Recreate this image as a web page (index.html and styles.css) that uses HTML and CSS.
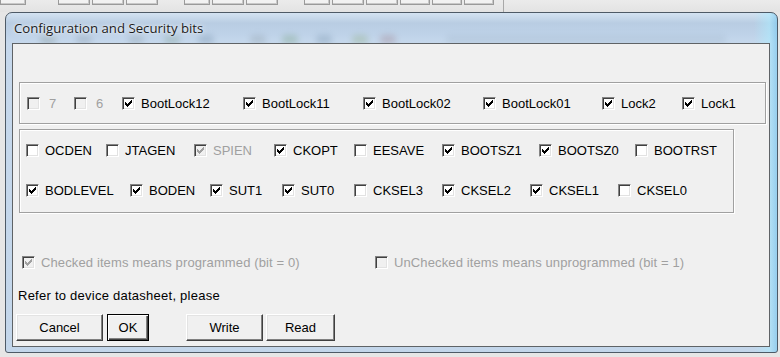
FILE: index.html
```html
<!DOCTYPE html>
<html>
<head>
<meta charset="utf-8">
<title>Configuration and Security bits</title>
<link rel="stylesheet" href="styles.css">
</head>
<body>
<div class="toolbar">
  <span class="tb tb-a"></span>
  <span class="tb tb-b"></span>
  <span class="tb tb-b"></span>
  <span class="tb tb-b"></span>
  <span class="tb tb-c"></span>
  <span class="tb tb-b"></span>
  <span class="tb tb-b"></span>
  <span class="tb tb-c"></span>
  <span class="tb tb-b"></span>
  <span class="tb tb-b"></span>
  <span class="tb tb-d"></span>
  <span class="tb tb-d"></span>
  <span class="tb tb-d"></span>
  <span class="tb-sep"></span>
</div>
<div class="window">
  <div class="titlebar">
    <span class="title">Configuration and Security bits</span>
    <div class="ghosts">
      <span class="ghost g1"></span><span class="ghost g2"></span><span class="ghost g3"></span>
      <span class="ghost g4"></span><span class="ghost g5"></span><span class="ghost g6"></span>
      <span class="ghost g7"></span><span class="ghost g8"></span><span class="ghost g9"></span>
      <span class="ghost g10"></span><span class="ghost g11"></span>
    </div>
  </div>
  <div class="client">
    <div class="group lock">
      <label class="item w47 dis gap9"><span class="cb"></span>7</label>
      <label class="item w48 dis gap9"><span class="cb"></span>6</label>
      <label class="item w121"><span class="cb on"><svg viewBox="0 0 7 7" width="7" height="7"><path d="M0 2H1V3H2V4H3V3H4V2H5V1H6V0H7V3H6V4H5V5H4V6H3V7H2V6H1V5H0Z"/></svg></span>BootLock12</label>
      <label class="item w120"><span class="cb on"><svg viewBox="0 0 7 7" width="7" height="7"><path d="M0 2H1V3H2V4H3V3H4V2H5V1H6V0H7V3H6V4H5V5H4V6H3V7H2V6H1V5H0Z"/></svg></span>BootLock11</label>
      <label class="item w120"><span class="cb on"><svg viewBox="0 0 7 7" width="7" height="7"><path d="M0 2H1V3H2V4H3V3H4V2H5V1H6V0H7V3H6V4H5V5H4V6H3V7H2V6H1V5H0Z"/></svg></span>BootLock02</label>
      <label class="item w119"><span class="cb on"><svg viewBox="0 0 7 7" width="7" height="7"><path d="M0 2H1V3H2V4H3V3H4V2H5V1H6V0H7V3H6V4H5V5H4V6H3V7H2V6H1V5H0Z"/></svg></span>BootLock01</label>
      <label class="item w80"><span class="cb on"><svg viewBox="0 0 7 7" width="7" height="7"><path d="M0 2H1V3H2V4H3V3H4V2H5V1H6V0H7V3H6V4H5V5H4V6H3V7H2V6H1V5H0Z"/></svg></span>Lock2</label>
      <label class="item"><span class="cb on"><svg viewBox="0 0 7 7" width="7" height="7"><path d="M0 2H1V3H2V4H3V3H4V2H5V1H6V0H7V3H6V4H5V5H4V6H3V7H2V6H1V5H0Z"/></svg></span>Lock1</label>
    </div>

    <div class="group fuse">
      <div class="row">
        <label class="item w80"><span class="cb"></span>OCDEN</label>
        <label class="item w88"><span class="cb"></span>JTAGEN</label>
        <label class="item w80 dis"><span class="cb on"><svg viewBox="0 0 7 7" width="7" height="7"><path d="M0 2H1V3H2V4H3V3H4V2H5V1H6V0H7V3H6V4H5V5H4V6H3V7H2V6H1V5H0Z"/></svg></span>SPIEN</label>
        <label class="item w80"><span class="cb on"><svg viewBox="0 0 7 7" width="7" height="7"><path d="M0 2H1V3H2V4H3V3H4V2H5V1H6V0H7V3H6V4H5V5H4V6H3V7H2V6H1V5H0Z"/></svg></span>CKOPT</label>
        <label class="item w88"><span class="cb"></span>EESAVE</label>
        <label class="item w97"><span class="cb on"><svg viewBox="0 0 7 7" width="7" height="7"><path d="M0 2H1V3H2V4H3V3H4V2H5V1H6V0H7V3H6V4H5V5H4V6H3V7H2V6H1V5H0Z"/></svg></span>BOOTSZ1</label>
        <label class="item w96"><span class="cb on"><svg viewBox="0 0 7 7" width="7" height="7"><path d="M0 2H1V3H2V4H3V3H4V2H5V1H6V0H7V3H6V4H5V5H4V6H3V7H2V6H1V5H0Z"/></svg></span>BOOTSZ0</label>
        <label class="item"><span class="cb"></span>BOOTRST</label>
      </div>
      <div class="row">
        <label class="item w104"><span class="cb on"><svg viewBox="0 0 7 7" width="7" height="7"><path d="M0 2H1V3H2V4H3V3H4V2H5V1H6V0H7V3H6V4H5V5H4V6H3V7H2V6H1V5H0Z"/></svg></span>BODLEVEL</label>
        <label class="item w80"><span class="cb on"><svg viewBox="0 0 7 7" width="7" height="7"><path d="M0 2H1V3H2V4H3V3H4V2H5V1H6V0H7V3H6V4H5V5H4V6H3V7H2V6H1V5H0Z"/></svg></span>BODEN</label>
        <label class="item w72"><span class="cb on"><svg viewBox="0 0 7 7" width="7" height="7"><path d="M0 2H1V3H2V4H3V3H4V2H5V1H6V0H7V3H6V4H5V5H4V6H3V7H2V6H1V5H0Z"/></svg></span>SUT1</label>
        <label class="item w72"><span class="cb on"><svg viewBox="0 0 7 7" width="7" height="7"><path d="M0 2H1V3H2V4H3V3H4V2H5V1H6V0H7V3H6V4H5V5H4V6H3V7H2V6H1V5H0Z"/></svg></span>SUT0</label>
        <label class="item w88"><span class="cb"></span>CKSEL3</label>
        <label class="item w88"><span class="cb on"><svg viewBox="0 0 7 7" width="7" height="7"><path d="M0 2H1V3H2V4H3V3H4V2H5V1H6V0H7V3H6V4H5V5H4V6H3V7H2V6H1V5H0Z"/></svg></span>CKSEL2</label>
        <label class="item w88"><span class="cb on"><svg viewBox="0 0 7 7" width="7" height="7"><path d="M0 2H1V3H2V4H3V3H4V2H5V1H6V0H7V3H6V4H5V5H4V6H3V7H2V6H1V5H0Z"/></svg></span>CKSEL1</label>
        <label class="item"><span class="cb"></span>CKSEL0</label>
      </div>
    </div>

    <div class="legend">
      <label class="item w353 dis"><span class="cb on"><svg viewBox="0 0 7 7" width="7" height="7"><path d="M0 2H1V3H2V4H3V3H4V2H5V1H6V0H7V3H6V4H5V5H4V6H3V7H2V6H1V5H0Z"/></svg></span>Checked items means programmed (bit = 0)</label>
      <label class="item dis"><span class="cb"></span>UnChecked items means unprogrammed (bit = 1)</label>
    </div>

    <div class="note">Refer to device datasheet, please</div>

    <div class="buttons">
      <button class="btn b-cancel">Cancel</button>
      <button class="btn b-ok default">OK</button>
      <button class="btn b-write">Write</button>
      <button class="btn b-read">Read</button>
    </div>
  </div>
</div>
</body>
</html>
```
FILE: styles.css
```css
* { box-sizing: border-box; }

html, body {
  margin: 0;
  padding: 0;
}

body {
  width: 780px;
  height: 357px;
  overflow: hidden;
  background: #e6e6e6;
  font-family: "Liberation Sans", Arial, sans-serif;
  font-size: 13px;
  color: #000;
}

/* strip of the application toolbar behind the dialog */
.toolbar {
  height: 12px;
  display: flex;
  align-items: flex-start;
  background: linear-gradient(#ebebeb, #e3e3e3);
}
.tb {
  height: 5px;
  border: 1px solid #9a9a9a;
  border-top: none;
  background: #f2f2f2;
  box-shadow: inset -1px -1px 0 #c8c8c8;
  margin-right: 2px;
}
.tb-a { width: 26px; margin-right: 32px; }
.tb-b { width: 32px; }
.tb-c { width: 26px; margin-left: 24px; }
.tb-d { width: 30px; }
.tb-sep {
  width: 1px;
  height: 12px;
  background: #a8a8a8;
  margin-left: 7px;
}

/* dialog window with glass frame */
.window {
  margin-left: 5px;
  width: 773px;
  height: 341px;
  border: 1px solid #4e5a66;
  border-radius: 7px 7px 3px 3px;
  background:
    linear-gradient(to right, rgba(255,255,255,0) 0, rgba(255,255,255,0) 97%, rgba(170,235,255,.55) 99%, rgba(120,200,240,.6) 100%),
    linear-gradient(to bottom, #d4e3f2 0, #b9cde3 10px, #bfd3e9 22px, #c6d8ec 30px, #c3d6ea 100%);
  padding: 30px 7px 5px 6px;
  display: flex;
  flex-direction: column;
  position: relative;
}

.titlebar {
  position: absolute;
  left: 0;
  top: 0;
  right: 0;
  height: 30px;
  overflow: hidden;
}
.title {
  position: absolute;
  left: 8px;
  top: 7px;
  font-family: "Open Sans", "Noto Sans", sans-serif;
  font-size: 13.2px;
  line-height: 17px;
  color: #1b1b1b;
  text-shadow: 0 0 6px rgba(255,255,255,.9), 0 0 2px rgba(255,255,255,.8);
  z-index: 2;
}
.ghosts {
  position: absolute;
  left: 0;
  top: 22px;
  display: flex;
  z-index: 1;
}
.ghost {
  width: 16px;
  height: 9px;
  border-radius: 4px;
  filter: blur(3px);
  opacity: .28;
}
.g1 { margin-left: 34px; background: #6e7f76; }
.g2 { margin-left: 20px; background: #7a8896; }
.g3 { margin-left: 36px; background: #7f9098; }
.g4 { margin-left: 20px; background: #6c8c76; }
.g5 { margin-left: 18px; background: #5f7c96; }
.g6 { margin-left: 36px; background: #839198; }
.g7 { margin-left: 16px; background: #629060; }
.g8 { margin-left: 18px; background: #628098; }
.g9 { margin-left: 20px; background: #80a060; }
.g10 { margin-left: 12px; background: #946870; }
.g11 { margin-left: 50px; background: #a0b4c8; width: 280px; opacity: .3; }

.client {
  flex: 1;
  background: #f0f0f0;
  border: 1px solid #5f6366;
  display: flex;
  flex-direction: column;
}

/* etched group boxes */
.group {
  border: 1px solid #a0a0a0;
  box-shadow: inset 1px 1px 0 #fff, 1px 1px 0 #fff;
}
.lock {
  margin: 38px 0 0 6px;
  width: 747px;
  height: 42px;
  display: flex;
  align-items: center;
  padding-left: 7px;
}
.fuse {
  margin: 5px 0 0 6px;
  width: 715px;
  height: 84px;
  padding: 0 0 0 6px;
}
.row {
  height: 40px;
  display: flex;
  align-items: center;
}

/* checkbox items */
.item {
  display: flex;
  align-items: center;
  gap: 6px;
  white-space: nowrap;
  line-height: 15px;
  flex: none;
}
.item.gap9 { gap: 9px; }
.w47 { width: 47px; }
.w48 { width: 48px; }
.w72 { width: 72px; }
.w80 { width: 80px; }
.w88 { width: 88px; }
.w96 { width: 96px; }
.w97 { width: 97px; }
.w104 { width: 104px; }
.w119 { width: 119px; }
.w120 { width: 120px; }
.w121 { width: 121px; }
.w353 { width: 353px; }

.cb {
  width: 13px;
  height: 13px;
  flex: none;
  background: #fff;
  border: 1px solid;
  border-color: #848484 #fff #fff #848484;
  box-shadow: inset 1px 1px 0 #404040, inset -1px -1px 0 #e2e2e2;
  display: flex;
  align-items: center;
  justify-content: center;
}
.cb svg {
  display: block;
  fill: #000;
  shape-rendering: crispEdges;
}
.item.dis { color: #a0a0a0; }
.item.dis .cb { background: #f0f0f0; }
.item.dis .cb svg { fill: #a0a0a0; }

.legend {
  margin-top: 39px;
  height: 20px;
  display: flex;
  align-items: center;
  padding-left: 9px;
  letter-spacing: 0.12px;
}

.note {
  margin-top: 14px;
  height: 20px;
  line-height: 20px;
  padding-left: 5px;
  letter-spacing: 0.25px;
}

.buttons {
  margin-top: 8px;
  display: flex;
  padding-left: 3px;
}
.btn {
  height: 27px;
  font-family: "Liberation Sans", Arial, sans-serif;
  font-size: 13px;
  color: #000;
  background: #f0f0f0;
  border: 1px solid;
  border-color: #fff #404040 #404040 #fff;
  box-shadow: inset -1px -1px 0 #808080, inset 1px 1px 0 #e3e3e3;
  padding: 0;
  border-radius: 0;
}
.btn.default {
  border: 1px solid #000;
  box-shadow: inset 1px 1px 0 #fff, inset -1px -1px 0 #404040, inset -2px -2px 0 #808080;
}
.b-cancel { width: 87px; }
.b-ok { width: 42px; margin-left: 4px; }
.b-write { width: 77px; margin-left: 37px; }
.b-read { width: 69px; margin-left: 3px; }
```
